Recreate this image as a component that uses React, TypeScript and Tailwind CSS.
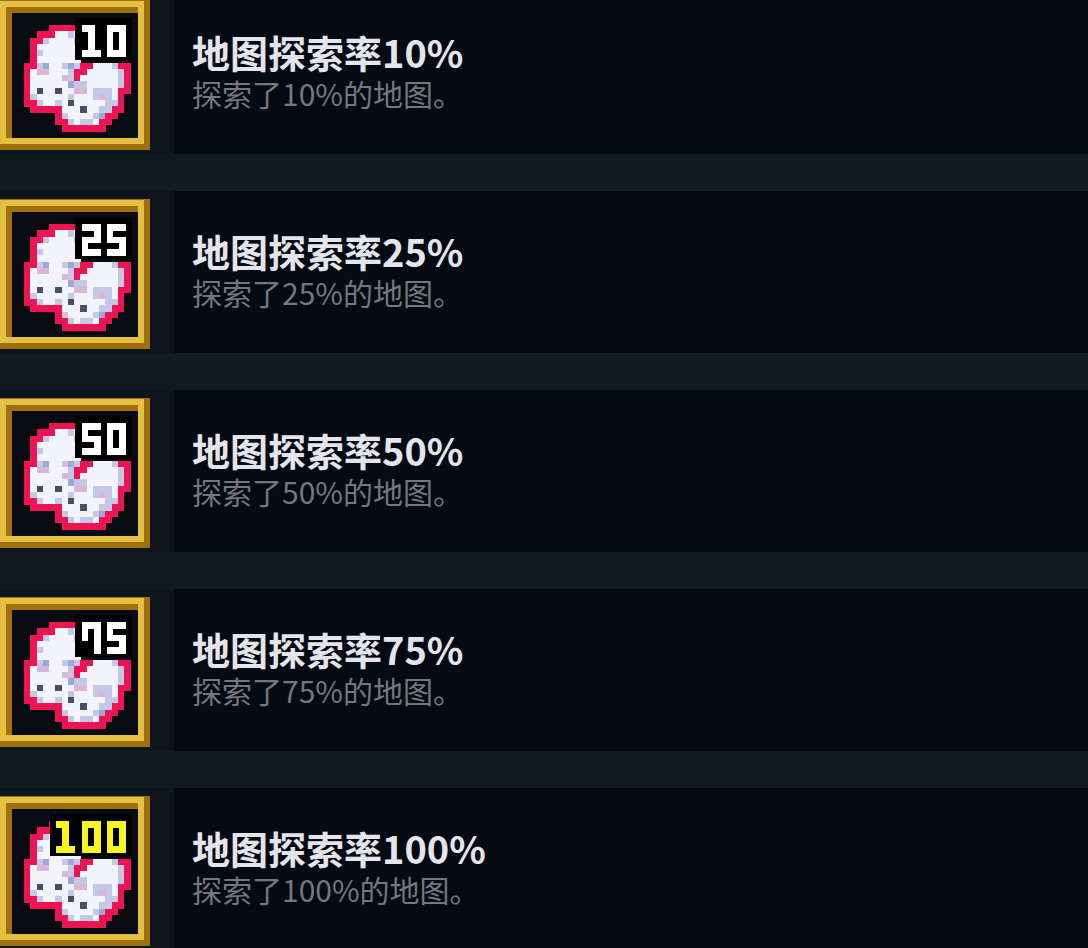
const CELL = 6.25;

// 17x17 sprite of the map fragments
// r red, w white, l lavender, m mid blue, p pink, g dark gray
const SPRITE = [
  "....rrrrr........",
  "..rrrwwlw........",
  ".rrlwwwwl........",
  ".rwwwwwww........",
  ".rlwwwwww........",
  ".rwwwwwww........",
  "rrlmwwlmlrrwwwlrr",
  "rwppwwwlrrwwwwwlr",
  "rwwwwwplrwwwwwwlr",
  "rwwwwwwmllwwwwwlr",
  "rwgwwgwwppwlllwrr",
  "rlwwwwwlwwwlplwr.",
  "rrlwwlwgwwwwwllr.",
  ".rrrrrwwwgwwllrr.",
  ".....rlwwwwlmrr..",
  ".....rrlwllwrr...",
  "......rrrrrrr....",
];

const COLORS: Record<string, string> = {
  r: "#ec1453",
  w: "#f3f4fb",
  l: "#c3c8e6",
  m: "#9ea8d6",
  p: "#dcb6d6",
  g: "#4b4e60",
};

const DIGITS: Record<string, string[]> = {
  "0": ["###", "#.#", "#.#", "#.#", "###"],
  "1": ["##.", ".#.", ".#.", ".#.", "###"],
  "2": ["###", "..#", "###", "#..", "###"],
  "5": ["###", "#..", "###", "..#", "###"],
  "7": ["###", "#.#", "#.#", "..#", "..#"],
};

function MapIcon({ value }: { value: string }) {
  const color = value === "100" ? "#f7f41f" : "#ffffff";
  const boxLeft = value === "100" ? 50 : 75;
  const digitStarts = value === "100" ? [56, 81.6, 106.6] : [81.6, 106.6];

  return (
    <svg width="150" height="150" viewBox="0 0 150 150" shapeRendering="crispEdges">
      {/* frame */}
      <rect x="0" y="0" width="150" height="150" fill="#a0700f" />
      <rect x="0" y="1" width="144" height="143" fill="#e3c03f" />
      <rect x="6" y="7" width="132" height="131" fill="#a0700f" />
      <rect x="12" y="13" width="126" height="125" fill="#090b13" />

      {SPRITE.map((row, r) =>
        row.split("").map((c, i) =>
          c === "." ? null : (
            <rect
              key={`${r}-${i}`}
              x={24 + i * CELL}
              y={25 + r * CELL}
              width={CELL + 0.4}
              height={CELL + 0.4}
              fill={COLORS[c]}
            />
          )
        )
      )}

      {/* count badge */}
      <rect x={boxLeft} y="18" width={132 - boxLeft} height="42" fill="#000000" />
      {value.split("").map((d, n) =>
        DIGITS[d].map((row, r) =>
          row.split("").map((c, i) =>
            c === "#" ? (
              <rect
                key={`${n}-${r}-${i}`}
                x={digitStarts[n] + i * CELL}
                y={25 + r * CELL}
                width={CELL + 0.4}
                height={CELL + 0.4}
                fill={color}
              />
            ) : null
          )
        )
      )}
    </svg>
  );
}

const ROWS = ["10", "25", "50", "75", "100"];

export default function App() {
  return (
    <div
      className="h-[948px] w-[1088px] overflow-hidden bg-[#111a21]"
      style={{ fontFamily: '"Noto Sans CJK SC", "Noto Sans", sans-serif' }}
    >
      <div className="-mt-[8px] flex flex-col gap-[37px]">
        {ROWS.map((value) => (
          <div key={value} className="flex h-[162px]">
            <div className="flex w-[174px] shrink-0 items-start bg-[#0e151d] pt-[8px]">
              <MapIcon value={value} />
            </div>
            <div className="flex flex-1 flex-col justify-center bg-[#060a12] pb-[5px] pl-[18px]">
              <div className="text-[38px] leading-[44px] font-bold text-[#e4e5ea]">
                地图探索率{value}%
              </div>
              <div className="mt-[1px] text-[30px] leading-[36px] text-[#75777e]">
                探索了{value}%的地图。
              </div>
            </div>
          </div>
        ))}
      </div>
    </div>
  );
}
